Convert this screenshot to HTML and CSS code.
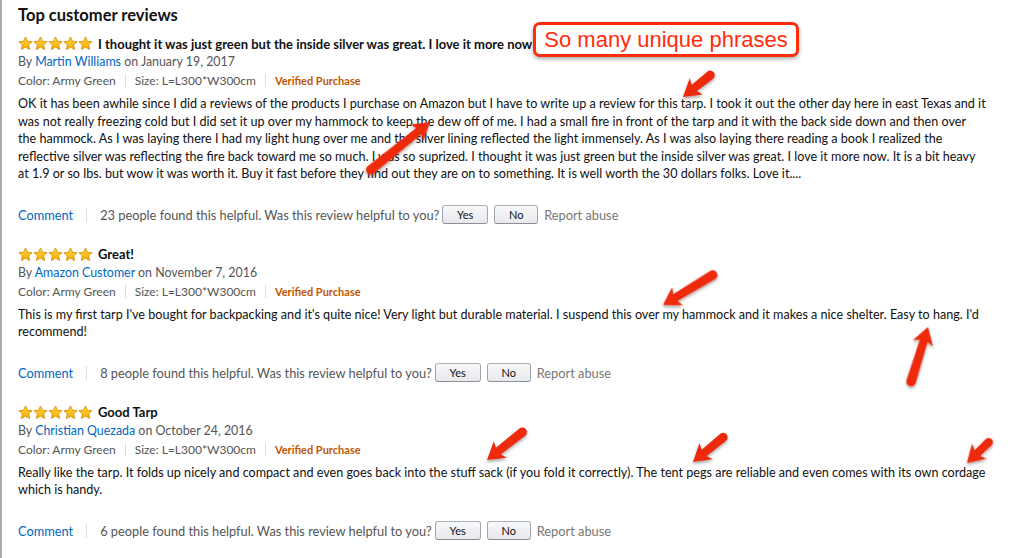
FILE: index.html
```html
<!DOCTYPE html>
<html lang="en">
<head>
    <meta charset="UTF-8">
    <meta name="viewport" content="width=device-width, initial-scale=1.0">
    <title>Top customer reviews</title>
    <link rel="stylesheet" href="styles.css">
</head>
<body>
    <svg class="defs" width="0" height="0">
        <defs>
            <linearGradient id="gold" x1="0" y1="0" x2="0" y2="1">
                <stop offset="0" stop-color="#ffd84a"/>
                <stop offset="1" stop-color="#f5ad00"/>
            </linearGradient>
            <symbol id="star" viewBox="0 0 16 16">
                <polygon points="8,1 10.1,5.6 15,6.1 11.3,9.4 12.4,14.4 8,11.8 3.6,14.4 4.7,9.4 1,6.1 5.9,5.6" fill="url(#gold)" stroke="#d98a00" stroke-width="0.9" stroke-linejoin="round"/>
            </symbol>
        </defs>
    </svg>

    <div class="page">
        <h2 class="section-title">Top customer reviews</h2>

        <div class="review">
            <div class="review-head">
                <span class="stars">
                    <svg><use href="#star"/></svg><svg><use href="#star"/></svg><svg><use href="#star"/></svg><svg><use href="#star"/></svg><svg><use href="#star"/></svg>
                </span>
                <span class="review-title">I thought it was just green but the inside silver was great. I love it more now</span>
            </div>
            <div class="byline">By <a href="#">Martin Williams</a> on January 19, 2017</div>
            <div class="meta"><span>Color: Army Green</span><span>Size: L=L300*W300cm</span><span class="verified">Verified Purchase</span></div>
            <p class="review-body">OK it has been awhile since I did a reviews of the products I purchase on Amazon but I have to write up a review for this tarp. I took it out the other day here in east Texas and it was not really freezing cold but I did set it up over my hammock to keep the dew off of me. I had a small fire in front of the tarp and it with the back side down and then over the hammock. As I was laying there I had my light hung over me and the silver lining reflected the light immensely. As I was also laying there reading a book I realized the reflective silver was reflecting the fire back toward me so much. I was so suprized. I thought it was just green but the inside silver was great. I love it more now. It is a bit heavy at 1.9 or so lbs. but wow it was worth it. Buy it fast before they find out they are on to something. It is well worth the 30 dollars folks. Love it....</p>
            <div class="actions">
                <a href="#" class="comment">Comment</a>
                <span class="helpful">23 people found this helpful. Was this review helpful to you?</span>
                <button>Yes</button>
                <button class="no">No</button>
                <span class="report">Report abuse</span>
            </div>
        </div>

        <div class="review">
            <div class="review-head">
                <span class="stars">
                    <svg><use href="#star"/></svg><svg><use href="#star"/></svg><svg><use href="#star"/></svg><svg><use href="#star"/></svg><svg><use href="#star"/></svg>
                </span>
                <span class="review-title">Great!</span>
            </div>
            <div class="byline">By <a href="#">Amazon Customer</a> on November 7, 2016</div>
            <div class="meta"><span>Color: Army Green</span><span>Size: L=L300*W300cm</span><span class="verified">Verified Purchase</span></div>
            <p class="review-body">This is my first tarp I've bought for backpacking and it's quite nice! Very light but durable material. I suspend this over my hammock and it makes a nice shelter. Easy to hang. I'd recommend!</p>
            <div class="actions">
                <a href="#" class="comment">Comment</a>
                <span class="helpful">8 people found this helpful. Was this review helpful to you?</span>
                <button>Yes</button>
                <button class="no">No</button>
                <span class="report">Report abuse</span>
            </div>
        </div>

        <div class="review">
            <div class="review-head">
                <span class="stars">
                    <svg><use href="#star"/></svg><svg><use href="#star"/></svg><svg><use href="#star"/></svg><svg><use href="#star"/></svg><svg><use href="#star"/></svg>
                </span>
                <span class="review-title">Good Tarp</span>
            </div>
            <div class="byline">By <a href="#">Christian Quezada</a> on October 24, 2016</div>
            <div class="meta"><span>Color: Army Green</span><span>Size: L=L300*W300cm</span><span class="verified">Verified Purchase</span></div>
            <p class="review-body">Really like the tarp. It folds up nicely and compact and even goes back into the stuff sack (if you fold it correctly). The tent pegs are reliable and even comes with its own cordage which is handy.</p>
            <div class="actions">
                <a href="#" class="comment">Comment</a>
                <span class="helpful">6 people found this helpful. Was this review helpful to you?</span>
                <button>Yes</button>
                <button class="no">No</button>
                <span class="report">Report abuse</span>
            </div>
        </div>

        <!-- annotations -->
        <div class="callout">So many unique phrases</div>
        <svg class="arrows" width="1024" height="558" viewBox="0 0 1024 558">
            <defs>
                <filter id="shadow" x="-30%" y="-30%" width="160%" height="160%">
                    <feDropShadow dx="0" dy="2" stdDeviation="1.5" flood-color="#000" flood-opacity="0.35"/>
                </filter>
            </defs>
            <g fill="#ee2a0d" filter="url(#shadow)">
                <path transform="translate(683,97) rotate(-38.7)" d="M0,0 L17,-10.5 L14.5,-4 L35,-4.5 A4.5,4.5 0 0 1 35,4.5 L14.5,4 L17,10.5 Z"/>
                <path transform="translate(430,122) rotate(141.1)" d="M0,0 L17,-10.5 L14.5,-4 L76,-4.8 A4.8,4.8 0 0 1 76,4.8 L14.5,4 L17,10.5 Z"/>
                <path transform="translate(663,305) rotate(-31.1)" d="M0,0 L17,-10.5 L14.5,-4 L58,-4.8 A4.8,4.8 0 0 1 58,4.8 L14.5,4 L17,10.5 Z"/>
                <path transform="translate(928,327) rotate(107.2)" d="M0,0 L17,-10.5 L14.5,-4 L57,-4.8 A4.8,4.8 0 0 1 57,4.8 L14.5,4 L17,10.5 Z"/>
                <path transform="translate(487,460) rotate(-38.3)" d="M0,0 L17,-10.5 L14.5,-4 L45,-4.6 A4.6,4.6 0 0 1 45,4.6 L14.5,4 L17,10.5 Z"/>
                <path transform="translate(693,462) rotate(-39.3)" d="M0,0 L17,-10.5 L14.5,-4 L39,-4.5 A4.5,4.5 0 0 1 39,4.5 L14.5,4 L17,10.5 Z"/>
                <path transform="translate(967,463) rotate(-43.8)" d="M0,0 L17,-10.5 L14.5,-4 L30,-4.3 A4.3,4.3 0 0 1 30,4.3 L14.5,4 L17,10.5 Z"/>
            </g>
        </svg>
    </div>
</body>
</html>
```

FILE: styles.css
```css
body {
    margin: 0;
    background: #fff;
    font-family: Lato, "Open Sans", sans-serif;
    color: #111;
}
.defs {
    position: absolute;
}
.page {
    position: relative;
    height: 558px;
    box-sizing: border-box;
    border-left: 2px solid #a9a9a9;
    padding: 5px 38px 0 16px;
    overflow: hidden;
}
.section-title {
    margin: 0 0 9px;
    font-size: 16.5px;
    line-height: 20px;
    font-weight: 700;
}
.review {
    margin-bottom: 20px;
}
.review-head {
    display: flex;
    align-items: center;
    height: 19px;
}
.stars {
    display: flex;
    margin-right: 5px;
}
.stars svg {
    width: 15px;
    height: 15px;
}
.review-title {
    font-size: 13px;
    font-weight: 700;
}
.byline {
    font-size: 12.4px;
    line-height: 18px;
    color: #555;
}
.byline a, .comment {
    color: #0066c0;
    text-decoration: none;
}
.meta {
    display: flex;
    align-items: center;
    font-size: 12px;
    line-height: 19px;
    color: #555;
}
.meta span + span {
    border-left: 1px solid #ddd;
    margin-left: 9px;
    padding-left: 9px;
    line-height: 13px;
}
.meta .verified {
    color: #c45500;
    font-weight: 700;
    font-size: 11px;
}
.review-body {
    margin: 5px 0 0;
    font-size: 12.6px;
    line-height: 17.5px;
}
.actions {
    display: flex;
    align-items: center;
    height: 20px;
    margin-top: 22px;
    font-size: 12.8px;
    color: #555;
}
.comment {
    padding-right: 13px;
    border-right: 1px solid #ddd;
    line-height: 14px;
}
.helpful {
    margin: 0 3px 0 13px;
}
.actions button {
    width: 46px;
    height: 19px;
    margin-right: 6px;
    padding: 0;
    font-family: inherit;
    font-size: 11px;
    color: #111;
    border: 1px solid #adb1b8;
    border-color: #adb1b8 #a2a6ac #8d9096;
    border-radius: 3px;
    background: linear-gradient(to bottom, #f7f8fa, #e7e9ec);
}
.actions .no {
    width: 44px;
}
.report {
    color: #767676;
}
.callout {
    position: absolute;
    left: 531px;
    top: 22px;
    width: 260px;
    height: 29px;
    border: 3px solid #ff2d0a;
    border-radius: 7px;
    background: #fff;
    box-shadow: 0 2px 4px rgba(0, 0, 0, 0.35);
    font-family: "Liberation Sans", Arial, sans-serif;
    font-size: 22px;
    line-height: 29px;
    color: #ff2d0a;
    text-align: center;
}
.arrows {
    position: absolute;
    left: -2px;
    top: 0;
    pointer-events: none;
}
```
